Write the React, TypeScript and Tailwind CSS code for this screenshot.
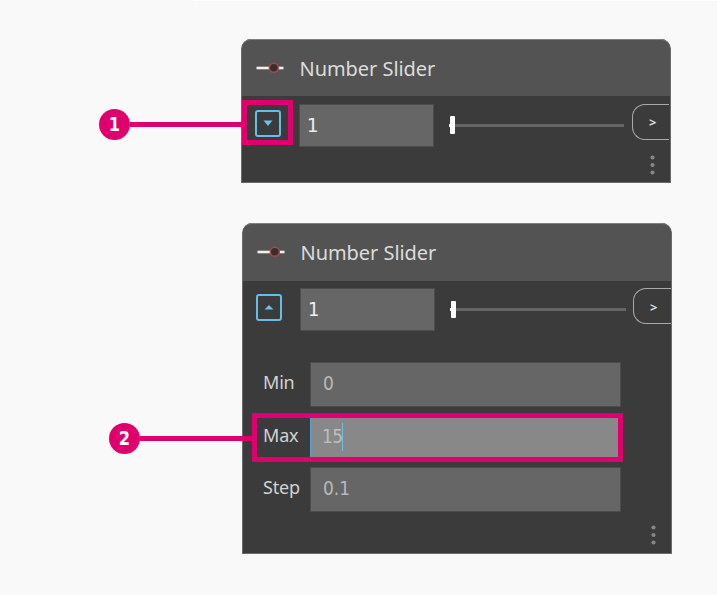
import React from "react";

const DIGITS = "font-['DejaVu_Sans_Condensed','DejaVu_Sans',sans-serif]";

function SliderIcon() {
  return (
    <svg width="28" height="12" viewBox="0 0 28 12" className="mb-[2px] shrink-0">
      <path d="M0.5 6H27.5" stroke="#f0f0f0" strokeWidth="2.6" />
      <circle cx="17.8" cy="5.8" r="4.5" fill="#3a2d2d" stroke="#a14d4b" strokeWidth="1.5" />
    </svg>
  );
}

function Header({ tall }: { tall?: boolean }) {
  return (
    <header
      className={`flex items-center rounded-t-[9px] border-t border-[#808080] bg-[#535353] pl-[14px] ${tall ? "h-[58px]" : "h-[57px] pt-px"}`}
    >
      <SliderIcon />
      <h2 className="ml-[15.5px] text-[20px] leading-[28px] tracking-[-0.05px] text-[#dcdcdc]">Number Slider</h2>
    </header>
  );
}

function Toggle({ open }: { open?: boolean }) {
  return (
    <button className="mt-[6px] flex h-[27px] w-[26px] shrink-0 items-center justify-center rounded-[3px] border-2 border-[#68bde6]">
      <svg width="10" height="7" viewBox="0 0 10 7">
        <path d={open ? "M0.5 5.5L5 1L9.5 5.5Z" : "M0.5 0.5H9.5L5 6Z"} fill="#6ac0e7" />
      </svg>
    </button>
  );
}

function ControlRow({ open }: { open?: boolean }) {
  return (
    <div className={`flex items-start pl-[13px] ${open ? "pt-[7px]" : "pt-[8px]"}`}>
      <Toggle open={open} />
      <div className={`ml-[18px] flex h-[43px] w-[135px] shrink-0 items-center border border-[#4c4c4c] bg-[#666] pb-[2px] pl-[7px] text-[20px] text-[#eee] ${DIGITS}`}>
        1
      </div>
      <div className={`ml-[15px] flex shrink-0 items-center ${open ? "mt-[13px] h-[17px] w-[176px]" : "mt-[12px] h-[18px] w-[175px]"}`}>
        <div className="h-[3px] w-px bg-white" />
        <div className="h-full w-[5px] rounded-[1px] bg-white" />
        <div className="h-[3px] flex-1 bg-[#656565]" />
      </div>
      <div
        className={`flex h-[36px] shrink-0 items-center rounded-l-[13px] border border-r-0 border-[#aaa] pl-[16px] text-[#e4e4e4] ${open ? "ml-[7px] w-[38px] pt-[2px]" : "ml-[8px] w-[37px]"}`}
      >
        <span className="font-['Noto_Sans',sans-serif] text-[13px] font-semibold leading-none">&gt;</span>
      </div>
    </div>
  );
}

function MoreDots() {
  return (
    <svg width="5" height="20" viewBox="0 0 5 20" fill="#858585">
      <circle cx="2.5" cy="2.5" r="2.1" />
      <circle cx="2.5" cy="10" r="2.1" />
      <circle cx="2.5" cy="17.5" r="2.1" />
    </svg>
  );
}

function Field({ label, value }: { label: string; value: string }) {
  return (
    <label className="flex h-[45px] items-center">
      <span className="w-[47px] pb-[5px] text-[18px] tracking-[-0.2px] text-[#d2d2d2]">{label}</span>
      <span className={`flex h-full w-[311px] items-center border border-[#4c4c4c] bg-[#666] pb-[3px] pl-[12px] text-[19px] text-[#b9b9b9] ${DIGITS}`}>
        {value}
      </span>
    </label>
  );
}

function Callout({ n, line }: { n: string; line: string }) {
  return (
    <div className="flex items-center">
      <div className="flex size-[31px] items-center justify-center rounded-full bg-[#df006e] pb-px font-['DejaVu_Sans_Condensed','DejaVu_Sans',sans-serif] text-[20px] font-bold leading-none text-white">
        <span className="scale-x-90">{n}</span>
      </div>
      <div className={`h-[5px] bg-[#df006e] ${line}`} />
    </div>
  );
}

export default function App() {
  return (
    <main className="relative flex h-[595px] w-[717px] flex-col overflow-hidden bg-[#f9f9f9] font-['Noto_Sans',sans-serif]">
      <div className="ml-[193px] h-px shrink-0 bg-white" />

      <section className="ml-[241px] mt-[38px] flex h-[144px] w-[430px] shrink-0 flex-col rounded-t-[10px] border border-t-0 border-[#6c6c6c] bg-[#3b3b3b]">
        <Header />
        <ControlRow />
        <div className="mt-[8px] flex justify-end pr-[15px]">
          <MoreDots />
        </div>
      </section>

      <section className="ml-[242px] mt-[40px] flex h-[331px] w-[430px] shrink-0 flex-col rounded-t-[10px] border border-t-0 border-[#6c6c6c] bg-[#3b3b3b]">
        <Header tall />
        <ControlRow open />
        <div className="mt-[31px] flex flex-col pl-[20px]">
          <Field label="Min" value="0" />
          <div className="-ml-[11px] mt-[6px] flex h-[49px] w-[371px] border-5 border-[#df006e] pl-[6px]">
            <span className="w-[47px] pt-[5px] text-[18px] leading-[25px] tracking-[-0.2px] text-[#d2d2d2]">Max</span>
            <span className={`flex flex-1 items-start border-l border-[#5c9fd6] bg-[#888] pl-[11px] pt-[5px] text-[19px] leading-[27px] tracking-[-0.7px] text-[#bcbcbc] ${DIGITS}`}>
              <span className="w-[20px]">15</span>
              <i className="block h-[28px] w-px bg-[#73bce8]" />
            </span>
          </div>
          <div className="mt-[5px]">
            <Field label="Step" value="0.1" />
          </div>
        </div>
        <div className="mt-[13px] flex justify-end pr-[15px]">
          <MoreDots />
        </div>
      </section>

      <div className="absolute left-[99px] top-[100px] flex items-start">
        <div className="mt-[9px]">
          <Callout n="1" line="w-[112px]" />
        </div>
        <div className="h-[45px] w-[51px] border-5 border-[#df006e]" />
      </div>
      <div className="absolute left-[109px] top-[423px]">
        <Callout n="2" line="w-[112px]" />
      </div>
    </main>
  );
}
